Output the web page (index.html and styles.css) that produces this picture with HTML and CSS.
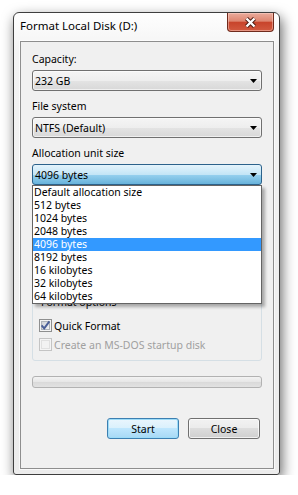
FILE: index.html
```html
<!DOCTYPE html>
<html lang="en">
<head>
  <meta charset="UTF-8" />
  <title>Format Local Disk (D:)</title>
  <link rel="stylesheet" href="styles.css">
</head>
<body>
<div class="window">
  <div class="title-bar">
    <span class="title">Format Local Disk (D:)</span>
    <button type="button" class="close-x" aria-label="Close">
      <svg width="13" height="11" viewBox="0 0 13 11">
        <path d="M2.5 1.5 L10.5 9.5 M10.5 1.5 L2.5 9.5" stroke="#4a1a10" stroke-width="4.2" fill="none"/>
        <path d="M2.5 1.5 L10.5 9.5 M10.5 1.5 L2.5 9.5" stroke="#ffffff" stroke-width="2.4" fill="none"/>
      </svg>
    </button>
  </div>

  <div class="client">
    <div class="field">
      <div class="label">Capacity:</div>
      <div class="combo"><span>232 GB</span><svg class="arrow" width="7" height="4" viewBox="0 0 7 4"><path d="M0 0 H7 L3.5 4 Z" fill="#000"/></svg></div>
    </div>

    <div class="field">
      <div class="label">File system</div>
      <div class="combo"><span>NTFS (Default)</span><svg class="arrow" width="7" height="4" viewBox="0 0 7 4"><path d="M0 0 H7 L3.5 4 Z" fill="#000"/></svg></div>
    </div>

    <div class="field">
      <div class="label">Allocation unit size</div>
      <div class="combo-wrap">
        <div class="combo open"><span>4096 bytes</span><svg class="arrow" width="7" height="4" viewBox="0 0 7 4"><path d="M0 0 H7 L3.5 4 Z" fill="#000"/></svg></div>
        <ul class="dropdown">
          <li>Default allocation size</li>
          <li>512 bytes</li>
          <li>1024 bytes</li>
          <li>2048 bytes</li>
          <li class="selected">4096 bytes</li>
          <li>8192 bytes</li>
          <li>16 kilobytes</li>
          <li>32 kilobytes</li>
          <li>64 kilobytes</li>
        </ul>
      </div>
    </div>

    <fieldset class="group">
      <legend>Format options</legend>
      <label class="check">
        <svg class="box" width="13" height="13" viewBox="0 0 13 13">
          <defs>
            <linearGradient id="boxfill" x1="0" y1="0" x2="1" y2="1">
              <stop offset="0" stop-color="#cbcfd5"/>
              <stop offset="1" stop-color="#f6f6f6"/>
            </linearGradient>
          </defs>
          <rect x="0.5" y="0.5" width="12" height="12" fill="#f4f4f4" stroke="#8e8f8f"/>
          <rect x="2.5" y="2.5" width="8" height="8" fill="url(#boxfill)" stroke="#aeb3b9"/>
          <path d="M2.6 6.4 L5.2 9.4 L10.4 2.4" stroke="#4a5f97" stroke-width="1.9" fill="none"/>
        </svg>
        Quick Format
      </label>
      <label class="check disabled">
        <svg class="box" width="13" height="13" viewBox="0 0 13 13">
          <rect x="0.5" y="0.5" width="12" height="12" fill="#f4f4f4" stroke="#c4c4c4"/>
          <rect x="2.5" y="2.5" width="8" height="8" fill="#f2f2f2" stroke="#e0e0e0"/>
        </svg>
        Create an MS-DOS startup disk
      </label>
    </fieldset>

    <div class="progress"></div>

    <div class="actions">
      <button type="button" class="btn default">Start</button>
      <button type="button" class="btn">Close</button>
    </div>
  </div>
</div>
</body>
</html>
```

FILE: styles.css
```css
body {
  margin: 0;
  background-color: #fff;
  font-family: 'Noto Sans', 'Open Sans', sans-serif;
  font-size: 10.5px;
  color: #000;
}

.window {
  display: flex;
  flex-direction: column;
  box-sizing: border-box;
  width: 267px;
  height: 463px;
  margin: 12px 0 0 13px;
  padding: 0 5px 5px 6px;
  border: 1px solid #3e3e3e;
  border-radius: 6px 6px 3px 3px;
  background: linear-gradient(#fefefe, #f3f3f3 40px, #ececec);
  box-shadow: 2px 5px 13px rgba(0, 0, 0, 0.6);
}

.title-bar {
  display: flex;
  justify-content: space-between;
  align-items: flex-start;
  height: 28px;
}

.title {
  padding-top: 5px;
  font-size: 11.5px;
  line-height: 15px;
}

.close-x {
  display: flex;
  align-items: center;
  justify-content: center;
  width: 47px;
  height: 19px;
  padding: 0;
  border: 1px solid #6f2a1c;
  border-top: none;
  border-radius: 0 0 4px 4px;
  background: linear-gradient(#eaab9c, #de8670 45%, #c8442b 52%, #d25a40);
  box-shadow: inset 0 0 0 1px rgba(255, 220, 210, 0.45);
}

.client {
  flex: 1;
  padding: 10px 11px 0 11px;
  border: 1px solid #8e8e8e;
  background-color: #f0f0f0;
  box-shadow: 0 0 0 1px rgba(255, 255, 255, 0.7);
}

.field {
  margin-bottom: 8px;
}

.label {
  line-height: 15px;
  margin-bottom: 3px;
}

.combo {
  display: flex;
  align-items: center;
  justify-content: space-between;
  box-sizing: border-box;
  height: 21px;
  padding: 1px 4px 0 2px;
  line-height: 18px;
  border: 1px solid #707070;
  border-radius: 3px;
  background: linear-gradient(#f5f5f5, #eeeeee 50%, #e4e4e4 50%, #d8d8d8);
  box-shadow: inset 0 0 0 1px rgba(255, 255, 255, 0.6);
}

.combo .arrow {
  margin-top: -1px;
}

.combo.open {
  border-color: #2c628b;
  background: linear-gradient(#e5f4fc, #c4e5f6 50%, #98d1ef 50%, #68b3db);
  box-shadow: none;
}

.combo-wrap {
  position: relative;
}

.dropdown {
  position: absolute;
  top: 100%;
  left: 0;
  right: 0;
  z-index: 2;
  margin: 0;
  padding: 0;
  list-style: none;
  background-color: #fff;
  border: 1px solid #646464;
  box-shadow: 3px 3px 3px rgba(0, 0, 0, 0.3);
}

.dropdown li {
  height: 13px;
  line-height: 13px;
  padding-left: 1px;
}

.dropdown li.selected {
  background-color: #3399ff;
  color: #fff;
}

.group {
  margin: 110px 0 0 0;
  min-width: 0;
  padding: 7px 0 7px 6px;
  border: 1px solid #d5dfe5;
  border-radius: 3px;
}

.group legend {
  padding: 0 2px;
  line-height: 15px;
}

.check {
  display: flex;
  align-items: center;
  height: 17px;
}

.check + .check {
  margin-top: 2px;
}

.check .box {
  margin-right: 2px;
}

.check.disabled {
  color: #a0a0a0;
}

.progress {
  box-sizing: border-box;
  height: 12px;
  margin-top: 15px;
  border: 1px solid #b2b2b2;
  border-radius: 3px;
  background: linear-gradient(#f3f3f3, #e6e6e6 50%, #d9d9d9 50%, #e2e2e2);
}

.actions {
  display: flex;
  justify-content: flex-end;
  gap: 9px;
  margin-top: 30px;
  padding-right: 2px;
}

.btn {
  box-sizing: border-box;
  height: 21px;
  width: 72px;
  padding: 0;
  font: inherit;
  color: #000;
  border: 1px solid #707070;
  border-radius: 3px;
  background: linear-gradient(#f2f2f2, #ebebeb 50%, #dddddd 50%, #cfcfcf);
  box-shadow: inset 0 0 0 1px rgba(255, 255, 255, 0.7);
}

.btn.default {
  border-color: #3c7fb1;
  background: linear-gradient(#eaf6fd, #d9f0fc 50%, #bee6fd 50%, #a7d9f5);
  box-shadow: inset 0 0 0 1px #9ddcf8;
}
```
